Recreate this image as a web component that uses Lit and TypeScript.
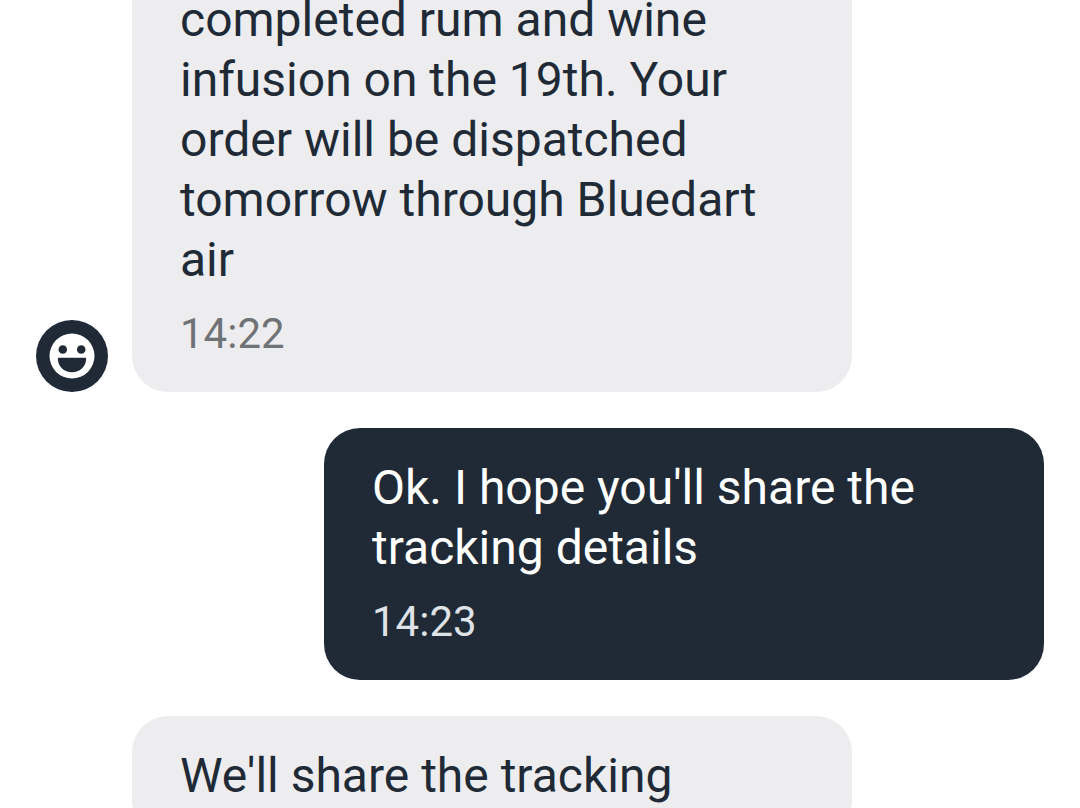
import { LitElement, html, css, nothing } from "lit";
import { customElement, property, state } from "lit/decorators.js";
import { classMap } from "lit/directives/class-map.js";

interface Message {
  text: string;
  time?: string;
  sent?: boolean;
  avatar?: boolean;
}

@customElement("chat-avatar")
class ChatAvatar extends LitElement {
  static styles = css`
    :host {
      display: flex;
      align-items: center;
      justify-content: center;
      width: 72px;
      height: 72px;
      border-radius: 50%;
      background: #202a36;
    }
    .face {
      width: 54px;
      height: 54px;
    }
  `;

  render() {
    return html`
      <svg class="face" viewBox="0 0 24 24" role="img" aria-label="Smiling face">
        <circle cx="12" cy="12" r="10" fill="#fff" />
        <g fill="#202a36">
          <circle cx="7.9" cy="9.1" r="1.9" />
          <circle cx="16.1" cy="9.1" r="1.9" />
          <path d="M6.2 12.8h11.6c.4 0 .6.3.5.7-.3 3.3-2.9 5.7-6.3 5.7s-6-2.4-6.3-5.7c-.1-.4.1-.7.5-.7z" />
        </g>
      </svg>
    `;
  }
}

@customElement("chat-message")
class ChatMessage extends LitElement {
  @property({ attribute: false }) message!: Message;

  static styles = css`
    :host {
      display: block;
    }
    .row {
      display: grid;
      grid-template-columns: 72px minmax(0, 1fr);
      column-gap: 24px;
      align-items: end;
    }
    .bubble {
      grid-column: 2;
      box-sizing: border-box;
      width: 100%;
      max-width: 720px;
      padding: 30px 48px;
      border-radius: 36px;
      background: #ededef;
      color: #202a36;
    }
    .sent .bubble {
      justify-self: end;
      background: #202a36;
      color: #fff;
    }
    .text {
      margin: 0;
      font-size: 48px;
      line-height: 60px;
    }
    .time {
      display: block;
      margin-top: 16px;
      font-size: 42px;
      line-height: 56px;
      color: #707375;
    }
    .sent .time {
      color: #dfe2e6;
    }
  `;

  render() {
    const { text, time, sent, avatar } = this.message;
    return html`
      <div class=${classMap({ row: true, sent: !!sent })}>
        ${avatar ? html`<chat-avatar></chat-avatar>` : nothing}
        <div class="bubble">
          <p class="text">${text}</p>
          ${time ? html`<time class="time">${time}</time>` : nothing}
        </div>
      </div>
    `;
  }
}

@customElement("app-root")
class AppRoot extends LitElement {
  @state() private messages: Message[] = [
    {
      text: "completed rum and wine infusion on the 19th. Your order will be dispatched tomorrow through Bluedart air",
      time: "14:22",
      avatar: true,
    },
    { text: "Ok. I hope you'll share the tracking details", time: "14:23", sent: true },
    { text: "We'll share the tracking" },
  ];

  static styles = css`
    :host {
      display: block;
      height: 100vh;
      overflow: hidden;
      background: #fff;
      font-family: Roboto, "Liberation Sans", sans-serif;
    }
    /* The thread is scrolled so that the first bubble starts above the view. */
    .thread {
      display: flex;
      flex-direction: column;
      gap: 36px;
      margin-top: -40px;
      padding: 0 36px;
    }
  `;

  render() {
    return html`
      <main class="thread">
        ${this.messages.map((m) => html`<chat-message .message=${m}></chat-message>`)}
      </main>
    `;
  }
}
